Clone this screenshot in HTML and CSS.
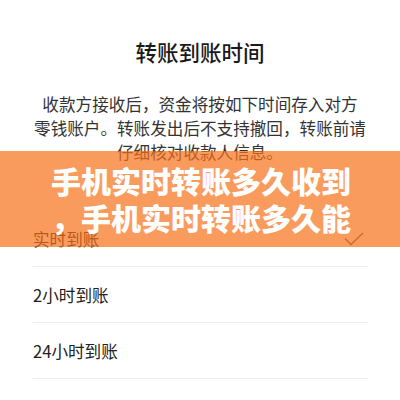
FILE: index.html
```html
<!DOCTYPE html>
<html lang="zh-CN">

<head>
    <meta charset="UTF-8">
    <meta name="viewport" content="width=device-width, initial-scale=1.0">
    <title>转账到账时间</title>
    <link rel="stylesheet" href="styles.css">
</head>

<body>
    <div class="sheet">
        <h1 class="title">转账到账时间</h1>
        <p class="desc">收款方接收后，资金将按如下时间存入对方<br>零钱账户。转账发出后不支持撤回，转账前请<br>仔细核对收款人信息。</p>

        <ul class="options">
            <li class="option selected">
                <span>实时到账</span>
                <svg class="check" width="20" height="14" viewBox="0 0 20 14">
                    <path d="M1 6.5 L7 12.5 L19 1" fill="none" stroke="currentColor" stroke-width="1.5" />
                </svg>
            </li>
            <li class="option"><span>2小时到账</span></li>
            <li class="option"><span>24小时到账</span></li>
        </ul>
    </div>

    <div class="banner">
        <span class="banner-line">手机实时转账多久收到</span>
        <span class="banner-line">，手机实时转账多久能</span>
    </div>
</body>

</html>
```

FILE: styles.css
```css
* {
    box-sizing: border-box;
}

body {
    margin: 0;
    background-color: #fff;
    font-family: "Noto Sans CJK SC", "Noto Sans", sans-serif;
    color: #333;
}

.sheet {
    padding-top: 37px;
}

.title {
    margin: 0;
    font-size: 21.5px;
    font-weight: 500;
    line-height: 30px;
    color: #1a1a1a;
    text-align: center;
}

.desc {
    margin: 25px 0 0;
    font-size: 16.6px;
    line-height: 24px;
    text-align: center;
    color: #333;
}

.options {
    list-style: none;
    margin: 47px 32px 0 33px;
    padding: 0;
}

.option {
    display: flex;
    justify-content: space-between;
    align-items: center;
    height: 56px;
    border-bottom: 1px solid #ececec;
    font-size: 16.6px;
    color: #222;
}

.check {
    margin-right: 4px;
    color: #666;
}

/* orange headline strip laid over the sheet */
.banner {
    position: absolute;
    left: 0;
    right: 0;
    top: 151px;
    height: 96px;
    padding: 11px 0;
    background-color: rgba(248, 112, 25, 0.7);
    text-align: center;
}

.banner-line {
    display: block;
    white-space: nowrap;
    font-size: 30px;
    font-weight: 900;
    line-height: 37px;
    color: #fff;
    padding-left: 2px;
}
```
